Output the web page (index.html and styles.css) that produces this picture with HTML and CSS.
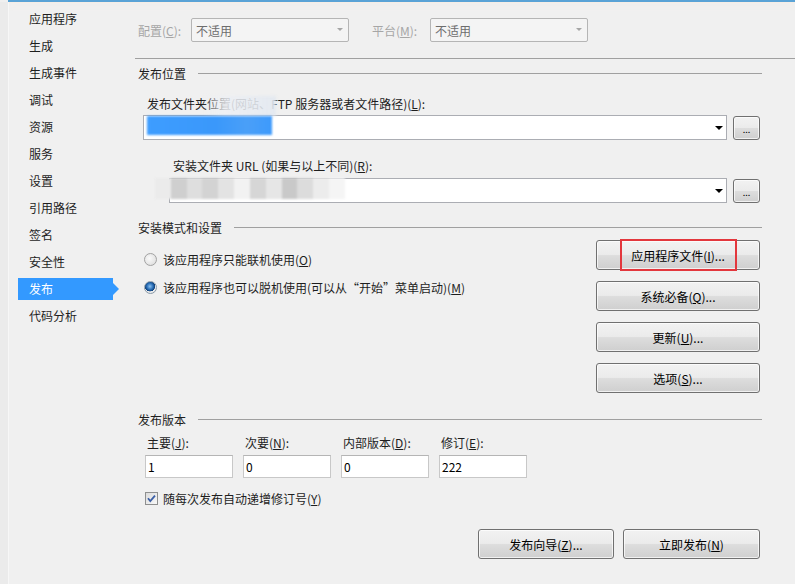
FILE: index.html
```html
<!DOCTYPE html>
<html lang="zh-CN">
<head>
<meta charset="utf-8">
<title>发布</title>
<link rel="stylesheet" href="styles.css">
</head>
<body>
<div class="window">
  <div class="topline"></div>
  <div class="layout">
    <nav class="sidebar">
      <ul class="nav">
        <li>应用程序</li>
        <li>生成</li>
        <li>生成事件</li>
        <li>调试</li>
        <li>资源</li>
        <li>服务</li>
        <li>设置</li>
        <li>引用路径</li>
        <li>签名</li>
        <li>安全性</li>
        <li class="active">发布</li>
        <li>代码分析</li>
      </ul>
    </nav>
    <main class="content">
      <div class="config-row">
        <span class="dlabel lbl-config">配置(<u>C</u>):</span>
        <div class="combo disabled"><span>不适用</span><i class="arrow"></i></div>
        <span class="dlabel lbl-platform">平台(<u>M</u>):</span>
        <div class="combo disabled"><span>不适用</span><i class="arrow"></i></div>
      </div>
      <div class="separator"></div>

      <div class="group-title"><span>发布位置</span><span class="rule"></span></div>
      <div class="field-label label-publish">发布文件夹位置(网站、FTP 服务器或者文件路径)(<u>L</u>):</div>
      <div class="path-row path-publish">
        <div class="combo edit"><i class="arrow"></i></div>
        <button class="btn browse">...</button>
        <div class="mosaic-light"></div>
        <div class="mosaic-blue"></div>
      </div>
      <div class="field-label label-install">安装文件夹 URL (如果与以上不同)(<u>R</u>):</div>
      <div class="path-row path-install">
        <div class="combo edit"><i class="arrow"></i></div>
        <button class="btn browse">...</button>
        <div class="mosaic-gray">
          <span></span><span></span><span></span><span></span><span></span><span></span>
          <span></span><span></span><span></span><span></span><span></span><span></span>
        </div>
      </div>

      <div class="group-title title-mode"><span>安装模式和设置</span><span class="rule"></span></div>
      <div class="mode">
        <div class="radios">
          <label class="radio-row"><span class="radio"></span>该应用程序只能联机使用(<u>O</u>)</label>
          <label class="radio-row"><span class="radio checked"></span>该应用程序也可以脱机使用(可以从“开始”菜单启动)(<u>M</u>)</label>
        </div>
        <div class="mode-buttons">
          <div class="btn-wrap">
            <button class="btn wide">应用程序文件(<u>I</u>)...</button>
            <span class="highlight"></span>
          </div>
          <button class="btn wide">系统必备(<u>Q</u>)...</button>
          <button class="btn wide">更新(<u>U</u>)...</button>
          <button class="btn wide">选项(<u>S</u>)...</button>
        </div>
      </div>

      <div class="group-title title-version"><span>发布版本</span><span class="rule"></span></div>
      <div class="versions">
        <div class="ver">
          <div class="ver-label">主要(<u>J</u>):</div>
          <div class="textbox">1</div>
        </div>
        <div class="ver">
          <div class="ver-label">次要(<u>N</u>):</div>
          <div class="textbox">0</div>
        </div>
        <div class="ver">
          <div class="ver-label">内部版本(<u>D</u>):</div>
          <div class="textbox">0</div>
        </div>
        <div class="ver">
          <div class="ver-label">修订(<u>E</u>):</div>
          <div class="textbox">222</div>
        </div>
      </div>
      <label class="check-row">
        <span class="checkbox"><svg viewBox="0 0 13 13" width="13" height="13"><path d="M3 6.2 L5.3 9 L10 3.6" fill="none" stroke="#3b5fa6" stroke-width="1.8"/></svg></span>
        随每次发布自动递增修订号(<u>Y</u>)
      </label>

      <div class="footer">
        <button class="btn footer-btn wizard">发布向导(<u>Z</u>)...</button>
        <button class="btn footer-btn now">立即发布(<u>N</u>)</button>
      </div>
    </main>
  </div>
</div>
</body>
</html>
```
FILE: styles.css
```css
* { box-sizing: border-box; }
html, body { margin: 0; padding: 0; }
body {
  width: 795px;
  height: 584px;
  overflow: hidden;
  background: #f0f0f0;
  font-family: "Noto Sans CJK SC", "Microsoft YaHei", sans-serif;
  font-size: 12px;
  color: #1e1e1e;
}
u { text-decoration: underline; text-underline-offset: 1px; }

.window { width: 795px; height: 584px; background: #f0f0f0; }
.topline {
  height: 2px;
  margin-left: 8px;
  background: #5aa3d6;
  box-shadow: 0 1px 0 #f6eee6, 0 4px 6px #f3efe9;
}
.layout { display: flex; height: 582px; }

/* sidebar */
.sidebar {
  width: 120px;
  flex: none;
  border-left: 8px solid #ebebeb;
  box-shadow: inset 1px 0 0 #f7f7f7;
}
.nav { list-style: none; margin: 0; padding: 6px 0 0 10px; }
.nav li {
  position: relative;
  width: 95px;
  height: 22px;
  line-height: 22px;
  padding-left: 11px;
  margin-bottom: 5px;
  white-space: nowrap;
}
.nav li.active { background: #3399ff; color: #fff; }
.nav li.active::after {
  content: "";
  position: absolute;
  right: -6px;
  top: 5px;
  border-left: 6px solid #3399ff;
  border-top: 6px solid transparent;
  border-bottom: 6px solid transparent;
}

/* content */
.content { flex: 1; padding: 16px 33px 0 18px; }

.config-row { display: flex; align-items: center; height: 24px; }
.dlabel { color: #a6a6a6; white-space: nowrap; }
.lbl-config { width: 53px; }
.lbl-platform { width: 58px; margin-left: 23px; }

.combo {
  position: relative;
  height: 25px;
  border: 1px solid #abadb3;
  background: #fff;
  display: flex;
  align-items: center;
  padding-left: 4px;
}
.combo.disabled {
  width: 158px;
  height: 24px;
  background: #f4f4f4;
  border-color: #b5b5b5;
  border-radius: 2px;
  color: #6d6d6d;
}
.arrow {
  position: absolute;
  right: 3px;
  top: 50%;
  margin-top: -2px;
  width: 0;
  height: 0;
  border-top: 4px solid #000;
  border-left: 4px solid transparent;
  border-right: 4px solid transparent;
}
.combo.disabled .arrow { border-top-color: #a6a6a6; right: 5px; border-top-width: 3px; border-left-width: 3px; border-right-width: 3px; }

.separator {
  height: 1px;
  background: #a0a0a0;
  margin: 16px -33px 0 -3px;
}

.group-title { display: flex; align-items: center; height: 16px; margin-top: 6px; }
.group-title span:first-child { white-space: nowrap; }
.group-title .rule { flex: 1; height: 1px; background: #a0a0a0; margin-left: 12px; }
.title-mode { margin-top: 16px; }
.title-version { margin-top: 18px; }

.field-label { height: 16px; line-height: 16px; white-space: nowrap; }
.label-publish { margin-top: 15px; padding-left: 9px; }
.label-install { margin-top: 18px; padding-left: 35px; }

.path-row { position: relative; display: flex; align-items: center; gap: 6px; height: 25px; }
.path-publish { margin-top: 3px; padding-left: 5px; }
.path-publish .combo { width: 584px; }
.path-install { margin-top: 4px; padding-left: 31px; }
.path-install .combo { width: 558px; }

.btn {
  font: inherit;
  color: #000;
  border: 1px solid #707070;
  border-radius: 3px;
  background: linear-gradient(#f2f2f2 0%, #ebebeb 48%, #dddddd 52%, #cfcfcf 100%);
  box-shadow: inset 0 0 0 1px rgba(255,255,255,0.7);
  padding: 0;
  cursor: default;
}
.browse { width: 27px; height: 24px; font-size: 9px; line-height: 9px; padding-top: 4px; letter-spacing: 0; }

/* blurred overlays */
.mosaic-blue {
  position: absolute;
  left: 9px;
  top: 1px;
  width: 125px;
  height: 19px;
  background: linear-gradient(90deg, #3e9dff 0%, #3a98fb 55%, #4a9ff8 80%, #3d9afc 100%);
  filter: blur(0.8px);
}
.mosaic-light {
  position: absolute;
  left: 4px;
  top: -19px;
  width: 134px;
  height: 20px;
  background: linear-gradient(90deg, rgba(240,240,240,0) 0%, rgba(240,240,240,0) 45%, rgba(236,239,244,0.85) 62%, rgba(226,232,240,0.9) 100%);
  filter: blur(1.5px);
}
.mosaic-gray {
  position: absolute;
  left: 17px;
  top: 0;
  width: 190px;
  height: 21px;
  display: flex;
  filter: blur(1.2px);
}
.mosaic-gray span { flex: 1; background: #dadada; }
.mosaic-gray span:nth-child(1) { background: #ebebeb; }
.mosaic-gray span:nth-child(2) { background: #cfcfcf; }
.mosaic-gray span:nth-child(3) { background: #dedede; }
.mosaic-gray span:nth-child(4) { background: #d3d3d3; }
.mosaic-gray span:nth-child(5) { background: #e3e3e3; }
.mosaic-gray span:nth-child(6) { background: #f2f2f2; }
.mosaic-gray span:nth-child(7) { background: #d6d6d6; }
.mosaic-gray span:nth-child(8) { background: #e6e6e6; }
.mosaic-gray span:nth-child(9) { background: #c9c9c9; }
.mosaic-gray span:nth-child(10) { background: #dcdcdc; }
.mosaic-gray span:nth-child(11) { background: #ececec; }
.mosaic-gray span:nth-child(12) { background: #f5f5f5; }

/* install mode */
.mode { display: flex; justify-content: space-between; margin-top: 5px; padding-right: 2px; }
.radios { display: flex; flex-direction: column; gap: 12px; padding-top: 11px; padding-left: 6px; }
.radio-row { display: flex; align-items: center; height: 16px; white-space: nowrap; }
.radio {
  width: 13px;
  height: 13px;
  border-radius: 50%;
  border: 1px solid #a2a2a2;
  background: radial-gradient(circle at 40% 40%, #fafafa 0%, #e6e6e6 60%, #d6d6d6 100%);
  margin-right: 6px;
  flex: none;
}
.radio.checked {
  border-color: #8a9aa8;
  background:
    radial-gradient(circle at 45% 40%, #8cc2f0 0%, #2a6fb8 35%, #0f3f78 55%, rgba(15,63,120,0) 58%),
    radial-gradient(circle at 40% 40%, #fafafa 0%, #e2e2e2 100%);
}
.mode-buttons { display: flex; flex-direction: column; gap: 11px; }
.btn-wrap { position: relative; }
.wide { width: 164px; height: 30px; display: block; }
.highlight {
  position: absolute;
  left: 24px;
  top: -1px;
  width: 117px;
  height: 32px;
  border: 2px solid #e3373d;
  pointer-events: none;
}

/* versions */
.versions { display: flex; gap: 10px; margin-top: 8px; padding-left: 7px; }
.ver { width: 88px; }
.ver-label { height: 16px; line-height: 16px; padding-left: 2px; white-space: nowrap; }
.textbox {
  margin-top: 4px;
  height: 23px;
  border: 1px solid #c8c8c8;
  border-top-color: #b5b5b5;
  background: #fff;
  padding-left: 2px;
  line-height: 21px;
  color: #000;
}

.check-row { display: flex; align-items: center; height: 16px; margin-top: 12px; padding-left: 7px; white-space: nowrap; }
.checkbox {
  width: 13px;
  height: 13px;
  border: 1px solid #8e8f8f;
  background: linear-gradient(135deg, #dcdcdc, #f8f8f8);
  margin-right: 5px;
  display: flex;
  align-items: center;
  justify-content: center;
  flex: none;
}
.checkbox svg { display: block; margin: -1px; }

.footer { display: flex; justify-content: flex-end; gap: 9px; margin-top: 23px; padding-right: 2px; }
.footer-btn { height: 30px; }
.wizard { width: 136px; }
.now { width: 137px; }
```
